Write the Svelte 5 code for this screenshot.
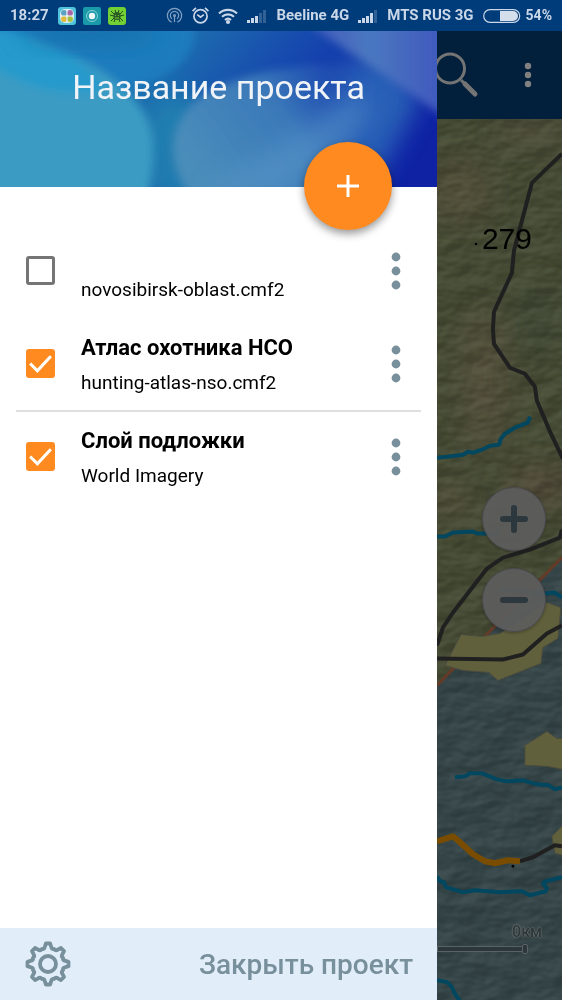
<script lang="ts">
  type Layer = {
    id: string
    title: string
    source: string
    visible: boolean
    divider: boolean
  }

  let layers: Layer[] = $state([
    { id: 'oblast', title: '', source: 'novosibirsk-oblast.cmf2', visible: false, divider: false },
    { id: 'atlas', title: 'Атлас охотника НСО', source: 'hunting-atlas-nso.cmf2', visible: true, divider: false },
    { id: 'base', title: 'Слой подложки', source: 'World Imagery', visible: true, divider: true }
  ])

  function polar(radius: number, degrees: number): string {
    const angle = (degrees * Math.PI) / 180
    return `${(24 + radius * Math.sin(angle)).toFixed(2)} ${(24 - radius * Math.cos(angle)).toFixed(2)}`
  }

  // Eight teeth, each joined to the next one by a rounded valley
  function gearPath(): string {
    let path = ''
    for (let i = 0; i < 8; i++) {
      const a = i * 45
      path += `${i === 0 ? 'M' : 'L'}${polar(20.6, a - 6)} L${polar(20.6, a + 6)} `
      path += `L${polar(17.8, a + 10)} Q${polar(15, a + 14)} ${polar(16.2, a + 22.5)} `
      path += `Q${polar(15, a + 31)} ${polar(17.8, a + 35)} `
    }
    return path + 'Z'
  }
</script>

{#snippet dots()}
  <svg class="dots" viewBox="0 0 10 38" aria-hidden="true">
    <circle cx="5" cy="5" r="4.4" />
    <circle cx="5" cy="19" r="4.4" />
    <circle cx="5" cy="33" r="4.4" />
  </svg>
{/snippet}

{#snippet signal(level: number)}
  <svg class="signal" viewBox="0 0 20 14" aria-hidden="true">
    {#each [3, 5, 7, 10, 13] as height, i}
      <rect x={i * 4} y={14 - height} width="3" {height} opacity={i < level ? 1 : 0.25} />
    {/each}
  </svg>
{/snippet}

<div class="screen">
  <div class="status-bar">
    <span>18:27</span>
    <svg class="app-icon" viewBox="0 0 18 18" aria-hidden="true">
      <rect width="18" height="18" rx="3" fill="#4fc3dc" />
      <rect x="2" y="2" width="14" height="14" rx="5" fill="#d8ecee" />
      <circle cx="6" cy="6" r="2.9" fill="#5aa0c4" />
      <circle cx="12" cy="6" r="2.9" fill="#a866a8" />
      <circle cx="6" cy="12" r="2.9" fill="#e0b83a" />
      <circle cx="12" cy="12" r="2.9" fill="#a5bf3f" />
      <path d="M9 2v14M2 9h14" stroke="#e6f2f4" />
    </svg>
    <svg class="app-icon" viewBox="0 0 18 18" aria-hidden="true">
      <rect width="18" height="18" rx="2" fill="#189aa8" />
      <circle cx="9" cy="9" r="5.5" fill="none" stroke="#8fd0d8" />
      <circle cx="9" cy="9" r="3.2" fill="#eef8f8" />
    </svg>
    <svg class="app-icon" viewBox="0 0 18 18" aria-hidden="true">
      <rect width="18" height="18" rx="3" fill="#72d034" />
      <path d="M3 4l3 3M15 4l-3 3M2 8l4 1M16 8l-4 1M3 14l3-3M15 14l-3-3M6 15l1-3M12 15l-1-3M7 3l1 3M11 3l-1 3" stroke="#234a20" fill="none" />
      <ellipse cx="9" cy="9" rx="3.6" ry="4" fill="#2c5a25" />
      <path d="M7 8l1 1M11 8l-1 1M7 11h4" stroke="#72d034" />
    </svg>

    <div class="status-right">
      <svg class="stroke-icon dim" viewBox="0 0 18 18" aria-hidden="true">
        <path d="M6 16a7.6 7.6 0 1 1 6 0" />
        <path d="M6.2 12.4a4.4 4.4 0 1 1 5.6 0" />
        <circle cx="9" cy="9" r="1" />
        <path d="M9 10v6" />
      </svg>
      <svg class="stroke-icon" viewBox="0 0 18 18" aria-hidden="true">
        <circle cx="9" cy="9.8" r="7" />
        <path d="M5.6 8l3.4 2.8L12.6 8M0.6 4.4L4.2 1M17.4 4.4L13.8 1" />
      </svg>
      <svg class="stroke-icon wifi" viewBox="0 0 20 16" aria-hidden="true">
        <path d="M1 5.5a13 13 0 0 1 18 0M4 8.8a8.7 8.7 0 0 1 12 0M7 12a4.5 4.5 0 0 1 6 0" />
        <circle cx="10" cy="14" r="1" />
      </svg>
      {@render signal(3)}
      <span>Beeline 4G</span>
      {@render signal(4)}
      <span>MTS RUS 3G</span>
      <span class="battery">
        <svg viewBox="0 0 38 14" aria-hidden="true">
          <rect x="0.7" y="0.7" width="36" height="12.6" rx="6.3" fill="none" stroke="#c9d7e8" stroke-width="1.2" />
          <path d="M17 2h13a5 5 0 0 1 0 10H17z" fill="#d5dfec" />
        </svg>
        54%
      </span>
    </div>
  </div>

  <div class="content">
    <aside class="drawer">
      <header class="project-header">
        <svg class="backdrop" viewBox="0 0 437 156" preserveAspectRatio="none" aria-hidden="true">
          <defs>
            <linearGradient id="base" x1="0" y1="0" x2="1" y2="0.3">
              <stop offset="0" stop-color="#1f86b8" />
              <stop offset="0.38" stop-color="#1d6fae" />
              <stop offset="0.68" stop-color="#1646ae" />
              <stop offset="1" stop-color="#0f22a4" />
            </linearGradient>
            <linearGradient id="petal" x1="0" y1="0.5" x2="1" y2="0">
              <stop offset="0" stop-color="#4a8dba" />
              <stop offset="0.5" stop-color="#3a78b9" />
              <stop offset="1" stop-color="#2350b4" stop-opacity="0" />
            </linearGradient>
            <linearGradient id="violet" x1="0" y1="0" x2="1" y2="0">
              <stop offset="0" stop-color="#4256bb" />
              <stop offset="0.45" stop-color="#4a78c0" />
              <stop offset="1" stop-color="#3f55bd" />
            </linearGradient>
            <filter id="soft"><feGaussianBlur stdDeviation="4" /></filter>
            <filter id="softer" x="-0.3" y="-0.5" width="1.6" height="2"><feGaussianBlur stdDeviation="12" /></filter>
          </defs>
          <rect width="437" height="156" fill="url(#base)" />
          <ellipse cx="175" cy="120" rx="40" ry="60" fill="#2386b0" opacity="0.8" filter="url(#softer)" />
          <path d="M290 180L350 30L400 30L420 70L360 180Z" fill="#2f6dbb" opacity="0.8" filter="url(#softer)" />
          <g filter="url(#soft)">
            <ellipse cx="90" cy="4" rx="104" ry="58" fill="#1f7cbe" />
            <path d="M-9-2C50 8 152 50 153 112C154 140 150 150 149 170H-9Z" fill="#3b9bc3" />
            <path d="M-9-4C40 4 84 26 106 58C60 68 24 56-9 34Z" fill="#279acc" />
            <path d="M194 170C164 134 164 90 206 62C250 38 320 30 370 34C390 60 350 140 300 175Z" fill="url(#petal)" />
            <path d="M304-10L450 90V-10Z" fill="url(#violet)" />
          </g>
          <path d="M205 160L360 64L372 80L290 160Z" fill="#5b99cb" opacity="0.5" filter="url(#softer)" />
          <ellipse cx="90" cy="0" rx="70" ry="14" fill="#176ea6" opacity="0.7" filter="url(#softer)" />
        </svg>
        <h1>Название проекта</h1>
        <button type="button" class="add-button" aria-label="Добавить слой">
          <svg viewBox="0 0 24 24" aria-hidden="true"><path d="M12 1v22M1 12h22" /></svg>
        </button>
      </header>

      <ul class="layers">
        {#each layers as layer (layer.id)}
          <li class="layer" class:divider={layer.divider}>
            <span class="check">
              <input id={`layer-${layer.id}`} type="checkbox" bind:checked={layer.visible} />
              <svg viewBox="0 0 28 28" aria-hidden="true"><path d="M4 14l7 7L24 7" /></svg>
            </span>
            <label for={`layer-${layer.id}`}>
              <strong>{layer.title}</strong>
              <span>{layer.source}</span>
            </label>
            <button type="button" class="layer-menu" aria-label="Меню слоя">{@render dots()}</button>
          </li>
        {/each}
      </ul>

      <footer class="drawer-footer">
        <button type="button" class="settings" aria-label="Настройки">
          <svg viewBox="0 0 48 48" aria-hidden="true">
            <path d={gearPath()} />
            <circle cx="24" cy="24" r="8" />
          </svg>
        </button>
        <button type="button" class="close-project">Закрыть проект</button>
      </footer>
    </aside>

    <main class="map-side">
      <div class="toolbar">
        <button type="button" class="search" aria-label="Поиск">
          <svg viewBox="0 0 44 46" aria-hidden="true">
            <circle cx="13" cy="16.5" r="14.5" stroke-width="3" />
            <path d="M24 28l4 4" stroke-width="3" />
            <path d="M28 32l10 10" stroke-width="5" stroke-linecap="round" />
          </svg>
        </button>
        <button type="button" class="toolbar-menu" aria-label="Меню">
          <svg viewBox="0 0 8 26" aria-hidden="true">
            <circle cx="4" cy="4" r="3.2" />
            <circle cx="4" cy="13" r="3.2" />
            <circle cx="4" cy="22" r="3.2" />
          </svg>
        </button>
      </div>

      <div class="map">
        <svg class="map-canvas" viewBox="437 118 125 882" preserveAspectRatio="xMinYMin slice" aria-hidden="true">
          <defs>
            <filter id="relief" x="0" y="0" width="1" height="1" color-interpolation-filters="sRGB">
              <feTurbulence type="fractalNoise" baseFrequency="0.03 0.05" numOctaves="3" seed="8" />
              <feDiffuseLighting surfaceScale="6" lighting-color="#ffffff">
                <feDistantLight azimuth="235" elevation="28" />
              </feDiffuseLighting>
            </filter>
            <filter id="haze" x="-0.5" y="-0.5" width="2" height="2"><feGaussianBlur stdDeviation="14" /></filter>
          </defs>
          <rect x="437" y="118" width="125" height="882" fill="#464b35" />
          <g filter="url(#haze)">
            <ellipse cx="460" cy="190" rx="30" ry="30" fill="#514e39" />
            <ellipse cx="530" cy="130" rx="40" ry="12" fill="#51503c" />
            <ellipse cx="485" cy="380" rx="24" ry="70" fill="#524f3a" />
            <ellipse cx="535" cy="320" rx="24" ry="40" fill="#404834" />
            <ellipse cx="540" cy="485" rx="30" ry="16" fill="#54493a" />
            <ellipse cx="450" cy="500" rx="20" ry="20" fill="#504d38" />
          </g>
          <path d="M562 557L437 685V1000H562Z" class="lowland" />
          <rect class="relief" x="437" y="118" width="125" height="882" filter="url(#relief)" />

          <path d="M562 557L437 685" stroke="#653b28" stroke-width="3" />
          <g class="town">
            <path d="M461 634L482 636L500 633L547 602L561 607L558 638L543 647L541 663L498 680L489 672L463 670L445 665Z" />
            <path d="M547 731L557 738H563V769L547 766L525 765V745Z" />
            <path d="M563 825L552 836L555 853L563 855Z" />
          </g>
          <g class="river">
            <path d="M437 457L447 456L463 454L468 451L473 452L482 449L490 445L499 444L501 438L505 433L515 427L528 422L530 416" />
            <path d="M437 536H445L453 532L473 531L477 533H500" />
            <path d="M500 589L545 593L555 592L562 597" />
            <path d="M455 777L465 776L470 773H482L497 779L507 781L523 780L537 784L549 785L555 789L562 787" />
            <path d="M437 876L440 881L444 882L446 887L463 892L475 890L500 892L522 891L530 895L546 891L547 888L543 883L546 881L562 877" />
            <path d="M437 980L447 982L452 987L454 992L460 1001" />
          </g>
          <g class="road">
            <path d="M562 153L532 182L514 250L512 272L494 311L493 328L494 343L510 367L525 373L535 386L537 400L551 433L563 458" />
            <path d="M562 529L560 537L530 549L503 557L487 568L453 612L443 627L437 645" />
            <path d="M437 658L503 659L523 654L547 633L562 625" />
            <path d="M520 861L533 857L555 845L562 846" />
          </g>
          <path d="M437 841L453 836L460 842L473 854L485 861L495 863L508 860L520 861" class="track" />
          <circle cx="513" cy="866" r="1.4" />
          <circle cx="476" cy="243" r="1.2" />
          <text x="482" y="248" class="elevation">279</text>
        </svg>

        <div class="zoom-controls">
          <button type="button" aria-label="Приблизить">
            <svg viewBox="0 0 28 28" aria-hidden="true"><path d="M14 3v22M3 14h22" /></svg>
          </button>
          <button type="button" aria-label="Отдалить">
            <svg viewBox="0 0 28 28" aria-hidden="true"><path d="M3 14h22" /></svg>
          </button>
        </div>

        <div class="scale">
          <span>0км</span>
          <i></i>
        </div>
      </div>
    </main>
  </div>
</div>

<style>
  :global(body) {
    margin: 0;
  }

  .screen {
    min-height: 100vh;
    display: flex;
    flex-direction: column;
    background: #fff;
    font-family: Roboto, 'Noto Sans', sans-serif;
  }

  button {
    padding: 0;
    border: 0;
    display: grid;
    place-items: center;
    background: none;
    color: inherit;
    font: inherit;
    cursor: pointer;
  }

  .status-bar {
    height: 31px;
    padding: 0 10px;
    display: flex;
    align-items: center;
    gap: 7px;
    background: #003b7a;
    color: #c9d7e8;
    font-size: 15px;
    font-weight: 700;
    line-height: 31px;
    white-space: nowrap;
  }

  .app-icon {
    width: 18px;
    height: 18px;
  }

  .app-icon:first-of-type {
    margin-left: 2px;
  }

  .status-right {
    margin-left: auto;
    display: flex;
    align-items: center;
    gap: 9px;
  }

  .stroke-icon {
    width: 17px;
    height: 17px;
    fill: none;
    stroke: #c9d7e8;
    stroke-width: 1.8;
    overflow: visible;
  }

  .dim {
    stroke-width: 1.3;
    opacity: 0.65;
  }

  .wifi {
    width: 20px;
    height: 16px;
    stroke-width: 2.2;
  }

  .signal {
    width: 20px;
    height: 14px;
    fill: #c9d7e8;
  }

  .battery {
    display: flex;
    align-items: center;
    gap: 5px;
    font-size: 14px;
  }

  .battery svg {
    width: 38px;
    height: 14px;
  }

  .content {
    flex: 1;
    display: grid;
    grid-template-columns: 7fr 2fr;
  }

  .drawer {
    min-width: 0;
    display: flex;
    flex-direction: column;
  }

  .project-header {
    position: relative;
    height: 156px;
    padding-bottom: 44px;
    box-sizing: border-box;
    display: grid;
    place-items: center;
  }

  .backdrop {
    position: absolute;
    inset: 0;
    width: 100%;
    height: 100%;
  }

  h1 {
    position: relative;
    margin: 0;
    color: #f0f4f8;
    font-size: 34px;
    font-weight: 400;
    line-height: 44px;
  }

  .add-button {
    position: absolute;
    right: 45px;
    bottom: -43px;
    width: 88px;
    height: 88px;
    border-radius: 50%;
    background: #ff8a20;
    box-shadow: 0 4px 8px rgb(0 0 0 / 40%);
  }

  .add-button svg {
    width: 24px;
    height: 24px;
    stroke: #fff;
    stroke-width: 3;
  }

  .layers {
    flex: 1;
    margin: 0;
    padding: 37px 16px;
    list-style: none;
  }

  .layer {
    position: relative;
    height: 93px;
    padding: 0 7px 0 10px;
    box-sizing: border-box;
    display: flex;
    align-items: center;
    gap: 26px;
  }

  .divider::before {
    content: '';
    position: absolute;
    inset: 0 0 auto;
    height: 2px;
    background: #dfdfdf;
  }

  .check {
    display: grid;
    width: 29px;
    height: 29px;
  }

  .check input,
  .check svg {
    grid-area: 1 / 1;
    width: 29px;
    height: 29px;
    margin: 0;
    box-sizing: border-box;
  }

  .check input {
    appearance: none;
    border: 3px solid #757575;
    border-radius: 3px;
    background: #fff;
  }

  .check input:checked {
    border-color: #ff8a20;
    background: #ff8a20;
  }

  .check svg {
    visibility: hidden;
    fill: none;
    stroke: #fff;
    stroke-width: 3;
    pointer-events: none;
  }

  .check input:checked + svg {
    visibility: visible;
  }

  .layer label {
    flex: 1;
    min-width: 0;
    padding-top: 2px;
    display: flex;
    flex-direction: column;
    color: #000;
    font-size: 19px;
    line-height: 35px;
  }

  .layer strong {
    min-height: 35px;
    font-size: 22px;
    font-weight: 700;
  }

  .layer-menu {
    width: 36px;
    height: 48px;
  }

  .dots {
    width: 10px;
    height: 38px;
    fill: #78909c;
  }

  .drawer-footer {
    height: 72px;
    padding: 0 24px;
    display: flex;
    align-items: center;
    justify-content: space-between;
    background: #e1edf9;
    color: #78909c;
  }

  .settings svg {
    width: 48px;
    height: 48px;
    fill: none;
    stroke: currentColor;
    stroke-width: 3.8;
    stroke-linejoin: round;
  }

  .close-project {
    font-size: 28px;
    font-weight: 500;
  }

  .map-side {
    min-width: 0;
    display: flex;
    flex-direction: column;
    overflow: hidden;
  }

  .toolbar {
    height: 88px;
    padding-right: 30px;
    display: flex;
    align-items: center;
    justify-content: space-between;
    background: #021f3b;
  }

  .search svg {
    width: 44px;
    height: 46px;
    fill: none;
    stroke: #747474;
  }

  .toolbar-menu svg {
    width: 8px;
    height: 26px;
    fill: #808080;
  }

  .map {
    position: relative;
    flex: 1;
    overflow: hidden;
    background: #33464a;
  }

  .map-canvas {
    position: absolute;
    inset: 0;
    width: 100%;
    height: 100%;
  }

  .map-canvas path {
    fill: none;
    stroke-linejoin: round;
  }

  .map-canvas .lowland {
    fill: #364648;
  }

  .relief {
    mix-blend-mode: soft-light;
    opacity: 0.2;
  }

  .map-canvas .town path {
    fill: #60603d;
    stroke: #4b4b3c;
  }

  .river path {
    stroke: #00475f;
    stroke-width: 4;
  }

  .road path {
    stroke: #202020;
    stroke-width: 4;
  }

  .track {
    stroke: #7a4c00;
    stroke-width: 6;
  }

  .elevation {
    font-family: 'Liberation Sans', Arial, sans-serif;
    font-size: 30px;
  }

  .zoom-controls {
    position: absolute;
    right: 16px;
    bottom: 368px;
    display: grid;
    gap: 17px;
  }

  .zoom-controls button {
    width: 64px;
    height: 64px;
    border: 1px solid #4a4a50;
    border-radius: 50%;
    background: rgb(92 92 92 / 94%);
    box-shadow: 0 1px 3px rgb(0 0 0 / 30%);
  }

  .zoom-controls svg {
    width: 28px;
    height: 28px;
    stroke: #2c383d;
    stroke-width: 6;
    stroke-linecap: round;
  }

  .scale {
    position: absolute;
    right: 20px;
    bottom: 48px;
    left: 0;
    display: grid;
    color: #2c373b;
    font-size: 16px;
    font-weight: 500;
    line-height: 20px;
    text-align: right;
    text-shadow: 0 0 1px #777, 0 0 1px #777, 0 0 2px #777;
  }

  .scale i {
    position: relative;
    height: 4px;
    margin: 4px 15px 0 0;
    border: 1px solid #5a6265;
    background: #2c373b;
  }

  .scale i::after {
    content: '';
    position: absolute;
    top: -3px;
    right: -2px;
    width: 4px;
    height: 8px;
    border: 1px solid #5a6265;
    border-radius: 2px;
    background: #2c373b;
  }
</style>
